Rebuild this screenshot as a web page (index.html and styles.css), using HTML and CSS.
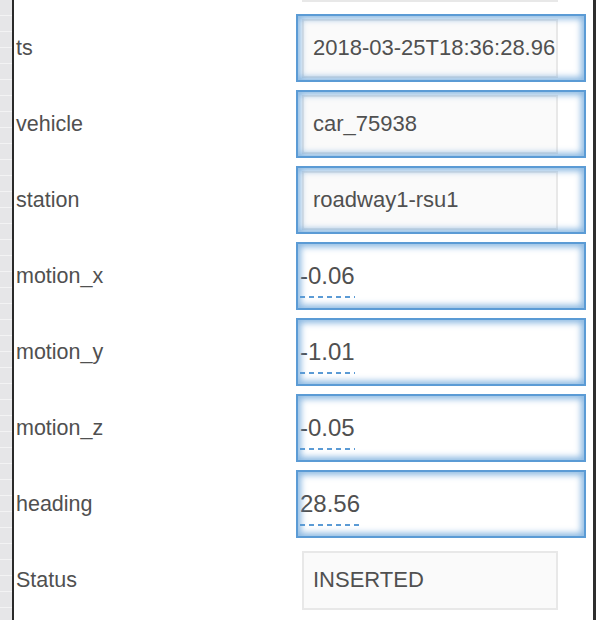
FILE: index.html
```html
<!DOCTYPE html>
<html lang="en">
<head>
    <meta charset="UTF-8">
    <meta name="viewport" content="width=device-width, initial-scale=1.0">
    <title>Reading Detail</title>
    <link rel="stylesheet" href="styles.css">
</head>
<body>
    <div class="gutter"></div>
    <div class="panel">
        <div class="form">
            <div class="row">
                <div class="label"></div>
                <div class="field"><div class="input"></div></div>
            </div>
            <div class="row">
                <div class="label">ts</div>
                <div class="field focus"><div class="input">2018-03-25T18:36:28.96</div></div>
            </div>
            <div class="row">
                <div class="label">vehicle</div>
                <div class="field focus"><div class="input">car_75938</div></div>
            </div>
            <div class="row">
                <div class="label">station</div>
                <div class="field focus"><div class="input">roadway1-rsu1</div></div>
            </div>
            <div class="row">
                <div class="label">motion_x</div>
                <div class="field focus editable"><span class="value">-0.06</span></div>
            </div>
            <div class="row">
                <div class="label">motion_y</div>
                <div class="field focus editable"><span class="value">-1.01</span></div>
            </div>
            <div class="row">
                <div class="label">motion_z</div>
                <div class="field focus editable"><span class="value">-0.05</span></div>
            </div>
            <div class="row">
                <div class="label">heading</div>
                <div class="field focus editable"><span class="value">28.56</span></div>
            </div>
            <div class="row">
                <div class="label">Status</div>
                <div class="field"><div class="input">INSERTED</div></div>
            </div>
        </div>
    </div>
</body>
</html>
```

FILE: styles.css
```css
html, body {
    height: 100%;
}
body {
    margin: 0;
    display: flex;
    background-color: #ffffff;
    font-family: "Liberation Sans", Arial, sans-serif;
    color: #505050;
    overflow: hidden;
}
.gutter {
    width: 12px;
    flex: none;
    background-color: #e6e6e8;
    background-image: repeating-linear-gradient(to bottom, transparent 0 15px, #f3f3f4 15px 16px);
    border-right: 2px solid #2a2a2a;
}
.panel {
    flex: 1;
    border-right: 3px solid #2e2e2e;
    overflow: hidden;
}
.form {
    margin-top: -66px;
}
.row {
    display: flex;
    align-items: center;
    height: 76px;
}
.label {
    width: 280px;
    padding-left: 2px;
    padding-top: 1px;
    font-size: 21.5px;
}
.field {
    position: relative;
    box-sizing: border-box;
    width: 290px;
    height: 68px;
    border: 2px solid transparent;
    padding: 0 4px;
    display: flex;
    align-items: center;
}
.field.focus {
    border-color: #5b9bd5;
}
.field.focus::after {
    content: '';
    position: absolute;
    inset: 0;
    box-shadow: inset 0 0 6px 3px rgba(91, 155, 213, 0.7);
    pointer-events: none;
}
.input {
    box-sizing: border-box;
    width: 256px;
    height: 59px;
    border: 2px solid #e8e8e8;
    background-color: #fafafa;
    padding-left: 9px;
    font-size: 22px;
    display: flex;
    align-items: center;
    white-space: nowrap;
    overflow: hidden;
}
.field.editable {
    display: block;
    padding: 18px 0 0 2px;
}
.value {
    display: inline-block;
    font-size: 24px;
    line-height: 28px;
    padding-bottom: 8px;
    background-image: repeating-linear-gradient(to right, #5b9bd5 0 5px, transparent 5px 9px);
    background-repeat: no-repeat;
    background-position: left bottom;
    background-size: 100% 2px;
}
```
